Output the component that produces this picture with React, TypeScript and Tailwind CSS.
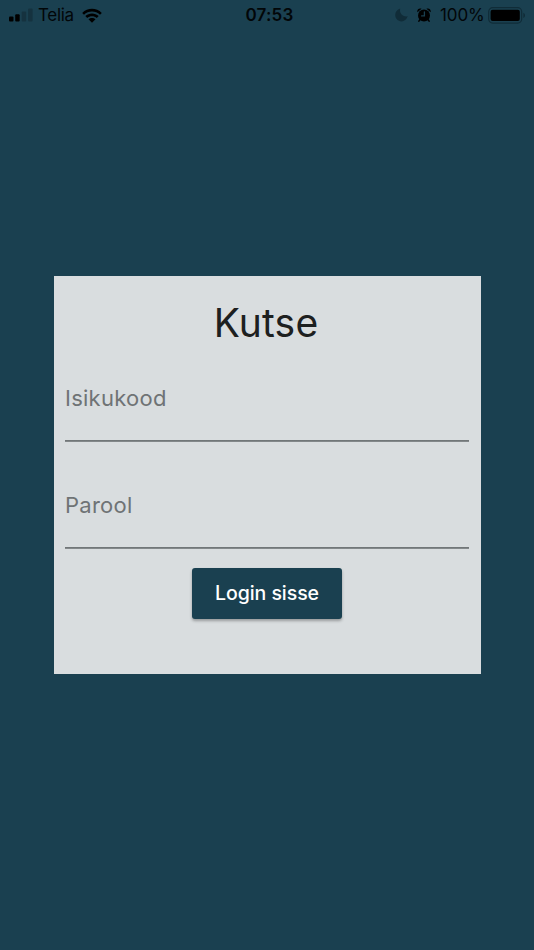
import React from "react";

function SignalBars() {
  return (
    <svg width="24" height="14" viewBox="0 0 24 14" className="shrink-0">
      <rect x="0" y="8.5" width="4.5" height="5" rx="1" fill="#000" />
      <rect x="6.2" y="6.3" width="4.5" height="7.2" rx="1" fill="#000" />
      <rect x="12.7" y="3.4" width="4.5" height="10.1" rx="1" fill="#15323f" />
      <rect x="19.1" y="0.5" width="4.5" height="13" rx="1" fill="#15323f" />
    </svg>
  );
}

function Wifi() {
  return (
    <svg width="20" height="15" viewBox="0 0 20 15" className="shrink-0">
      <path d="M0.2 4.9 C5.6 -0.6 14.4 -0.6 19.8 4.9 L18 6.8 C13.6 2.5 6.4 2.5 2 6.8 Z" fill="#000" />
      <path d="M3.3 8.1 C7 4.5 13 4.5 16.7 8.1 L14.8 10 C12.1 7.5 7.9 7.5 5.2 10 Z" fill="#000" />
      <path d="M6.5 11.3 C8.4 9.5 11.6 9.5 13.5 11.3 L10 14.8 Z" fill="#000" />
    </svg>
  );
}

function Moon() {
  return (
    <svg width="13" height="14" viewBox="0 0 13 14" className="shrink-0">
      <path d="M5.2 0.5 C4 5 7.6 9.2 12.7 8.3 C11.6 11.6 9.2 13.4 6.5 13.4 C3 13.4 0.2 10.6 0.2 7.1 C0.2 3.9 2.2 1.3 5.2 0.5 Z" fill="#102c38" />
    </svg>
  );
}

function Alarm() {
  return (
    <svg width="14" height="14" viewBox="0 0 14 14" className="shrink-0">
      <circle cx="7" cy="7.4" r="6" fill="#000" />
      <path d="M0.3 4.2 C-0.2 1.2 2.2 -0.2 4.6 0.8 Z M13.7 4.2 C14.2 1.2 11.8 -0.2 9.4 0.8 Z" fill="#000" />
      <path d="M2.9 11.7 L1.9 13.1 M11.1 11.7 L12.1 13.1" stroke="#000" strokeWidth="1.6" strokeLinecap="round" />
      <path d="M7.4 4 V7.9 H4.6" fill="none" stroke="#1a4050" strokeWidth="1.3" strokeLinecap="round" />
    </svg>
  );
}

function Battery() {
  return (
    <svg width="38" height="17" viewBox="0 0 38 17" className="shrink-0">
      <rect x="0.7" y="0.7" width="33" height="15.4" rx="4" fill="none" stroke="#102c38" strokeWidth="1.2" />
      <rect x="2.6" y="2.7" width="29.2" height="11.4" rx="2" fill="#000" />
      <path d="M35.3 5.8 C37.6 6.5 37.6 10.3 35.3 11 Z" fill="#102c38" />
    </svg>
  );
}

function StatusBar() {
  return (
    <header className="grid h-[30px] w-full grid-cols-[1fr_auto_1fr] items-center text-[17px] leading-[30px] text-[#020608]">
      <div className="flex items-center pl-[9px]">
        <SignalBars />
        <span className="ml-[5px] w-[44px] whitespace-nowrap tracking-[-0.3px]">Telia</span>
        <Wifi />
      </div>
      <span className="pl-[5px] font-semibold tracking-[0.2px]">07:53</span>
      <div className="flex items-center justify-end pr-[8px]">
        <Moon />
        <span className="ml-[9px] flex"><Alarm /></span>
        <span className="ml-[9px] w-[48px] whitespace-nowrap tracking-[-0.1px]">100%</span>
        <Battery />
      </div>
    </header>
  );
}

function Field({ label, type }: { label: string; type: string }) {
  return (
    <div className="w-full">
      <input
        type={type}
        placeholder={label}
        aria-label={label}
        className="block h-[83px] w-full bg-transparent pb-[2px] text-[22px] tracking-[0.25px] text-[#1d2022] outline-none placeholder:text-[#6f7375] placeholder:opacity-100"
      />
      <div className="h-[2px] bg-linear-to-b from-[#696e70] to-[#8c9193]" />
    </div>
  );
}

export default function App() {
  return (
    <div className="flex h-[950px] w-[534px] flex-col overflow-hidden bg-[#1a4050] font-['Inter','Liberation_Sans',sans-serif]">
      <StatusBar />
      <main className="mt-[246px] flex h-[398px] w-[427px] flex-col items-center self-center bg-[#d9dddf] px-[11.5px]">
        <h1 className="mt-[23px] h-[48px] pr-[2px] text-[39px] leading-[48px] tracking-[0.2px] text-[#1d2020]">Kutse</h1>
        <form className="flex w-full flex-col items-center" onSubmit={(e) => e.preventDefault()}>
          <div className="mt-[10px] w-full"><Field label="Isikukood" type="text" /></div>
          <div className="mt-[22px] w-full"><Field label="Parool" type="password" /></div>
          <button className="mt-[19px] h-[51px] w-[150px] rounded-[3px] bg-[#1a4050] text-[19.5px] font-medium tracking-[-0.05px] text-white shadow-[0_2px_3px_rgba(0,0,0,0.3)]">
            Login sisse
          </button>
        </form>
      </main>
    </div>
  );
}
